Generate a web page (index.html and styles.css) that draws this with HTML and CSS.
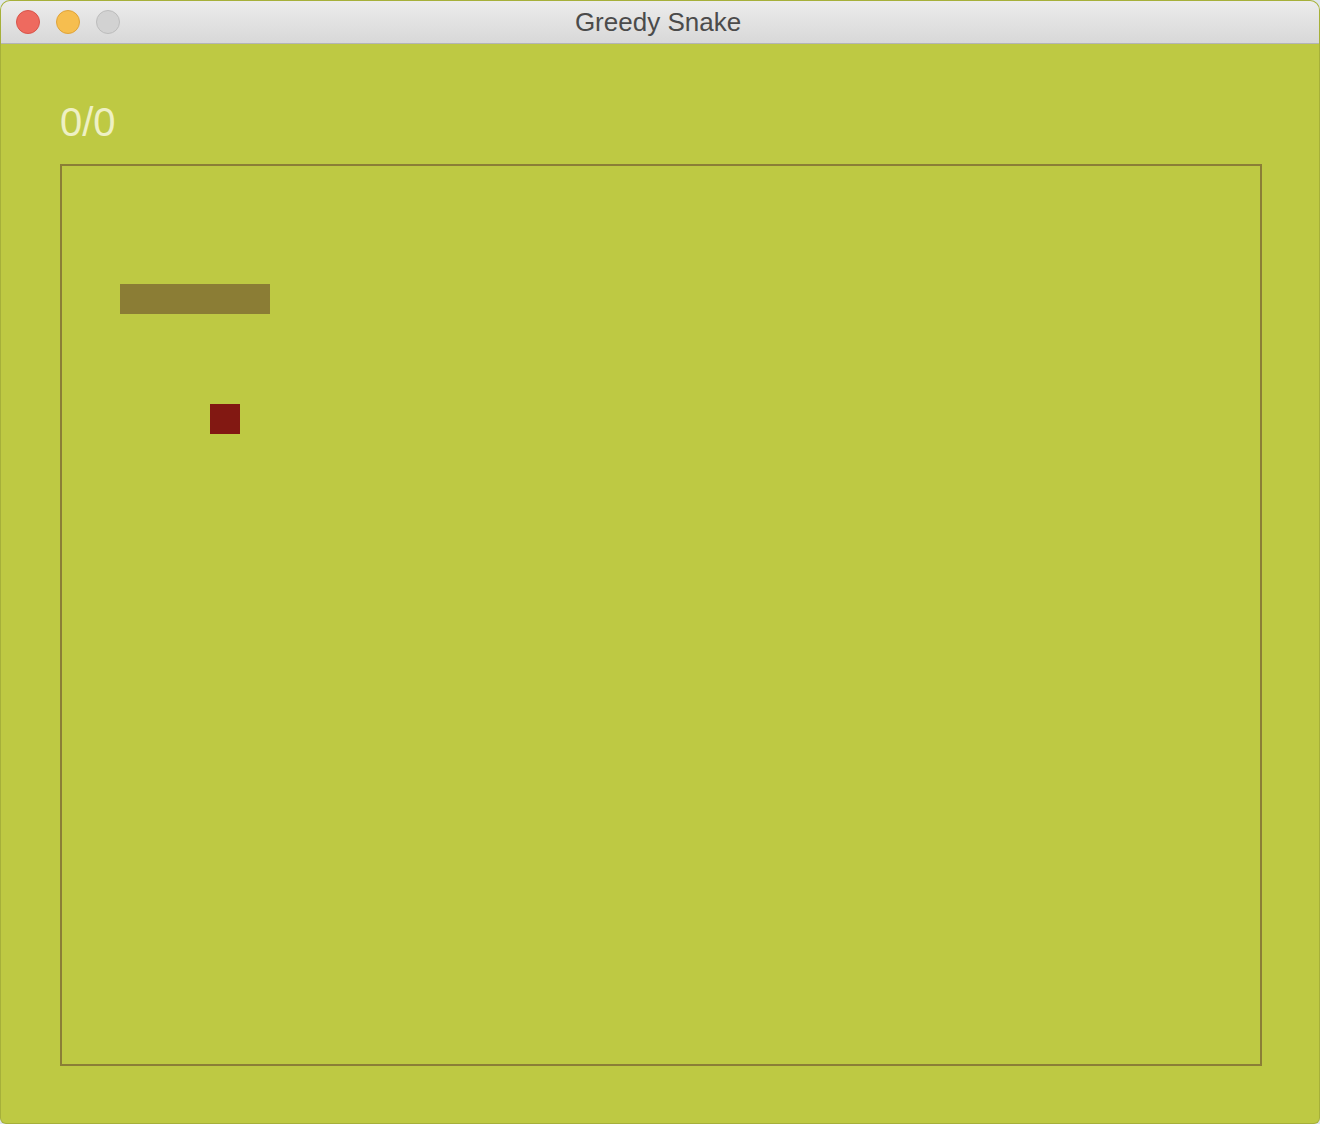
FILE: index.html
```html
<!DOCTYPE html>
<html>
<head>
<meta charset="utf-8">
<title>Greedy Snake</title>
<link rel="stylesheet" href="styles.css">
</head>
<body>
<div class="window">
  <div class="titlebar">
    <div class="lights">
      <span class="light red"></span>
      <span class="light yellow"></span>
      <span class="light gray"></span>
    </div>
    <div class="title">Greedy Snake</div>
  </div>
  <div class="content">
    <div class="score">0/0</div>
    <div class="board">
      <div class="snake" style="left:58px;top:118px;width:150px;height:30px"></div>
      <div class="food" style="left:148px;top:238px"></div>
    </div>
  </div>
</div>
</body>
</html>
```
FILE: styles.css
```css
html, body {
  margin: 0;
  padding: 0;
  width: 1320px;
  height: 1124px;
  background: #dfe6ee;
  overflow: hidden;
}
.window {
  width: 1320px;
  height: 1124px;
  border-radius: 10px 10px 6px 6px;
  overflow: hidden;
  background: #bec943;
  display: flex;
  flex-direction: column;
  box-sizing: border-box;
  border: 1px solid rgba(0,0,0,0.12);
}
.titlebar {
  height: 42px;
  flex: none;
  position: relative;
  background: linear-gradient(#ececec, #d8d8d8);
  border-bottom: 1px solid #b4b4b4;
  display: flex;
  align-items: center;
  justify-content: center;
}
.lights {
  position: absolute;
  left: 15px;
  top: 9px;
  display: flex;
  gap: 16px;
}
.light {
  width: 24px;
  height: 24px;
  border-radius: 50%;
  box-sizing: border-box;
}
.red { background: #ee6a5f; border: 1px solid #d8544a; }
.yellow { background: #f6be4f; border: 1px solid #dfa33a; }
.gray { background: #d2d2d2; border: 1px solid #bcbcbc; }
.title {
  font-family: "Liberation Sans", Arial, sans-serif;
  font-size: 26px;
  color: #4b4b4b;
  margin-right: 4px;
  margin-top: 1px;
}
.content {
  flex: 1;
  padding: 58px 0 0 59px;
}
.score {
  font-family: "Liberation Sans", Arial, sans-serif;
  font-size: 40px;
  line-height: 40px;
  height: 40px;
  color: #eef0c4;
  margin-bottom: 22px;
}
.board {
  position: relative;
  width: 1198px;
  height: 898px;
  border: 2px solid #8b7e36;
}
.snake {
  position: absolute;
  background: #8b7d35;
}
.food {
  position: absolute;
  width: 30px;
  height: 30px;
  background: #821812;
}
```
